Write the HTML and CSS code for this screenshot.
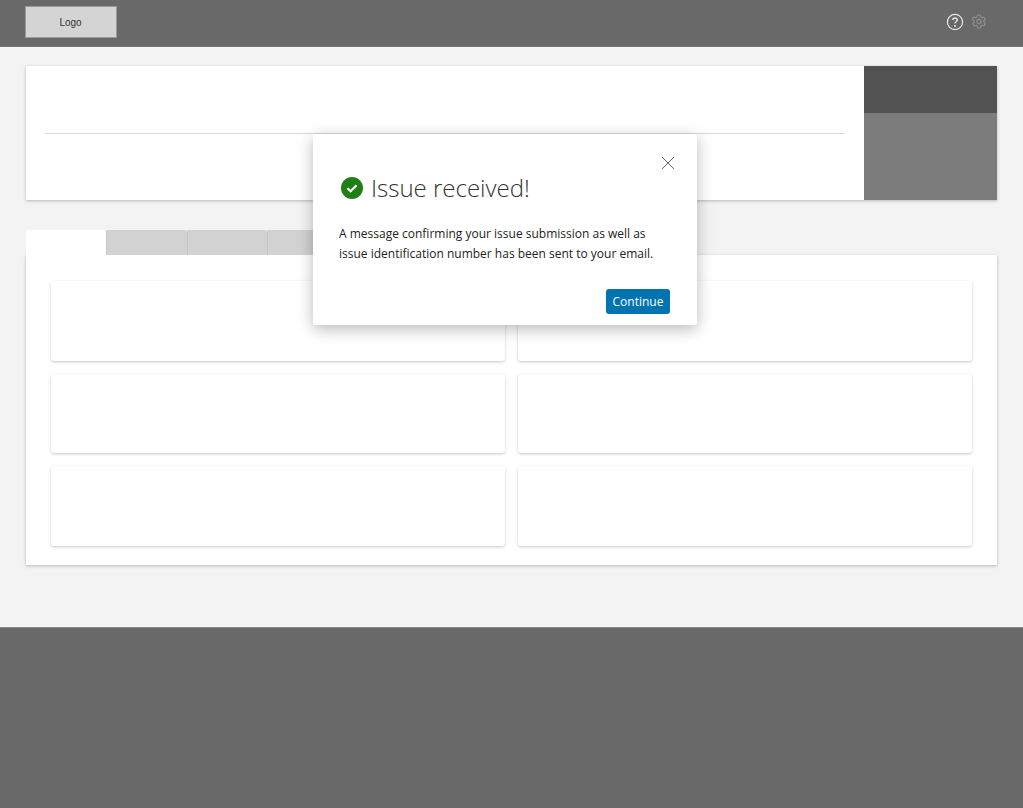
FILE: index.html
```html
<!DOCTYPE html>
<html lang="en">
<head>
    <meta charset="UTF-8">
    <meta name="viewport" content="width=device-width, initial-scale=1.0">
    <title>Issue received</title>
    <link rel="stylesheet" href="styles.css">
</head>
<body>
    <header class="top-bar">
        <div class="logo">Logo</div>
        <div class="top-icons">
            <svg class="icon-help" width="18" height="18" viewBox="0 0 18 18" fill="none">
                <circle cx="9" cy="9" r="7.6" stroke="#e6e6e6" stroke-width="1.2"/>
                <path d="M6.800 7.100c0-1.300 1-2.100 2.200-2.100s2.200.8 2.200 2c0 1.700-2.200 1.700-2.200 3.400" stroke="#e6e6e6" stroke-width="1.400"/>
                <circle cx="9" cy="12.900" r="1" fill="#e6e6e6"/>
            </svg>
            <svg class="icon-gear" width="16" height="16" viewBox="0 0 16 16" fill="none" stroke="#8e8e8e" stroke-width="1.2">
                <path d="M6.600 1h2.800l.4 2 1.200.7 1.900-.7 1.400 2.500-1.500 1.300v1.400l1.500 1.300-1.400 2.500-1.900-.7-1.200.7-.4 2H6.600l-.4-2-1.200-.7-1.900.7-1.400-2.500 1.500-1.300V6.800L1.300 5.500l1.400-2.500 1.900.7 1.200-.7z" stroke-linejoin="round"/>
                <circle cx="8" cy="7.500" r="2.200"/>
            </svg>
        </div>
    </header>

    <main class="content">
        <section class="summary">
            <div class="summary-main">
                <div class="summary-line"></div>
            </div>
            <div class="summary-side">
                <div class="side-top"></div>
                <div class="side-bottom"></div>
            </div>
        </section>

        <div class="tabs">
            <div class="tab active"></div>
            <div class="tab"></div>
            <div class="tab"></div>
            <div class="tab"></div>
        </div>
        <section class="panel">
            <div class="card"></div>
            <div class="card"></div>
            <div class="card"></div>
            <div class="card"></div>
            <div class="card"></div>
            <div class="card"></div>
        </section>
    </main>

    <footer class="footer"></footer>

    <div class="modal">
        <svg class="close" width="14" height="14" viewBox="0 0 14 14" fill="none" stroke="#666" stroke-width="1">
            <path d="M1 1l12 12M13 1L1 13"/>
        </svg>
        <h2 class="modal-title">
            <svg width="22" height="22" viewBox="0 0 22 22">
                <circle cx="11" cy="11" r="11" fill="#1f7f14"/>
                <path d="M6.500 11.300l3.100 3 5.900-6" fill="none" stroke="#fff" stroke-width="2.200"/>
            </svg>
            Issue received!
        </h2>
        <p class="modal-text">A message confirming your issue submission as well as issue identification number has been sent to your email.</p>
        <div class="modal-actions">
            <button class="continue">Continue</button>
        </div>
    </div>
</body>
</html>
```

FILE: styles.css
```css
body {
    margin: 0;
    background: #f3f3f3;
    font-family: "Open Sans", "Noto Sans", sans-serif;
    color: #222;
}

/* Top bar */
.top-bar {
    display: flex;
    justify-content: space-between;
    align-items: center;
    height: 47px;
    padding: 0 36px 0 25px;
    background: #696969;
    box-sizing: border-box;
    border-bottom: 1px solid #777;
}

.logo {
    display: flex;
    justify-content: center;
    align-items: center;
    width: 92px;
    height: 32px;
    margin-bottom: 3px;
    padding: 1px 1px 0 0;
    box-sizing: border-box;
    background: #d4d4d4;
    border: 1px solid #9a9a9a;
    font-family: "Liberation Sans", Arial, sans-serif;
    font-size: 10px;
    color: #333;
}

.top-icons {
    display: flex;
    align-items: center;
    gap: 7px;
    margin-bottom: 2px;
}

/* Content */
.content {
    padding: 19px 26px 0;
    height: 561px;
    box-sizing: border-box;
}

.summary {
    display: flex;
    height: 134px;
    background: #fff;
    box-shadow: 0 1px 3px rgba(0, 0, 0, 0.25);
}

.summary-main {
    flex: 1;
    padding: 67px 20px 0 19px;
}

.summary-line {
    height: 1px;
    background: #d8d8d8;
}

.summary-side {
    display: flex;
    flex-direction: column;
    width: 133px;
}

.side-top {
    height: 47px;
    background: #525252;
}

.side-bottom {
    flex: 1;
    background: #7c7c7c;
}

.tabs {
    display: flex;
    margin-top: 30px;
    height: 25px;
}

.tab {
    width: 80.500px;
    box-sizing: border-box;
    border-left: 1px solid #c6c6c6;
    background: #d2d2d2;
    border-radius: 2px 2px 0 0;
}

.tab.active {
    width: 80px;
    border-left: none;
    background: #fff;
}

.panel {
    display: grid;
    grid-template-columns: 1fr 1fr;
    gap: 13px;
    padding: 26px 25px 19.500px;
    background: #fff;
    box-shadow: 0 1px 3px rgba(0, 0, 0, 0.25);
}

.card {
    height: 79.500px;
    background: #fff;
    border-radius: 3px;
    box-shadow: 0 1px 3px rgba(0, 0, 0, 0.22);
}

.footer {
    height: 181px;
    margin-top: 19px;
    background: #696969;
    border-top: 1px solid #8a8a8a;
    box-sizing: border-box;
}

/* Confirmation dialog */
.modal {
    position: absolute;
    top: 134px;
    left: 313px;
    width: 384px;
    height: 191px;
    padding: 40px 27px 0 26px;
    box-sizing: border-box;
    background: #fff;
    border-radius: 2px;
    box-shadow: 0 4px 16px rgba(0, 0, 0, 0.28);
}

.close {
    position: absolute;
    top: 22px;
    right: 22px;
}

.modal-title {
    display: flex;
    align-items: center;
    gap: 8px;
    margin: 0 0 0 2px;
    font-size: 24px;
    font-weight: 300;
    line-height: 28px;
    color: #333;
}

.modal-text {
    margin: 21.500px 0 0;
    font-size: 12px;
    line-height: 20px;
    color: #222;
}

.modal-actions {
    display: flex;
    justify-content: flex-end;
    margin-top: 25px;
}

.continue {
    width: 64px;
    height: 25px;
    padding: 0;
    border: none;
    border-radius: 3px;
    background: #0073b1;
    color: #fff;
    font-family: inherit;
    font-size: 12px;
}
```
